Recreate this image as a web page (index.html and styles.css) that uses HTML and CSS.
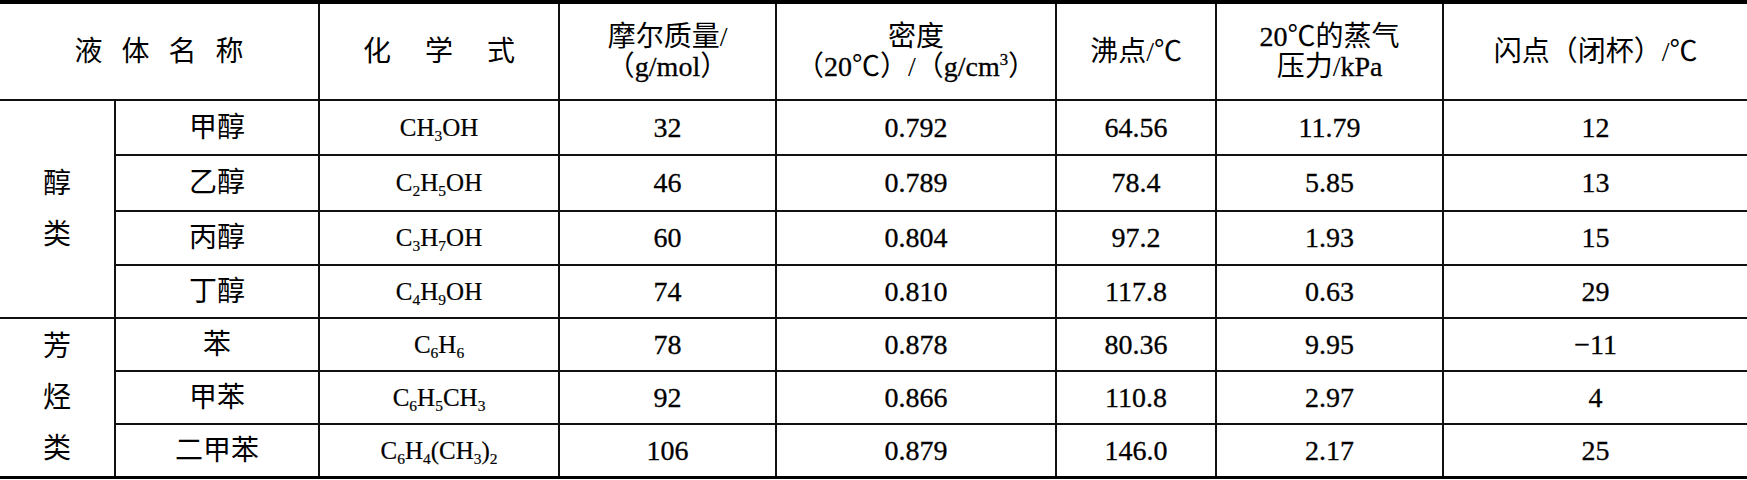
FILE: index.html
```html
<!DOCTYPE html>
<html lang="zh-CN">
<head>
    <meta charset="utf-8">
    <title>常见液体的物理性质</title>
    <link rel="stylesheet" href="styles.css">
</head>
<body>
<table class="tb">
    <colgroup>
        <col class="w1"><col class="w2"><col class="w3"><col class="w4">
        <col class="w5"><col class="w6"><col class="w7"><col class="w8">
    </colgroup>
    <tr class="head">
        <th colspan="2"><span class="sp1">液体名称</span></th>
        <th><span class="sp2">化学式</span></th>
        <th>摩尔质量/<br>（<span class="en">g/mol</span>）</th>
        <th>密度<br>（<span class="en">20</span>℃）/（<span class="en">g/cm<sup>3</sup></span>）</th>
        <th>沸点/℃</th>
        <th><span class="en">20</span>℃的蒸气<br>压力/<span class="en">kPa</span></th>
        <th>闪点（闭杯）/℃</th>
    </tr>
    <tr class="r1">
        <td rowspan="4" class="grp">醇<br>类</td>
        <td>甲醇</td>
        <td class="f">CH<sub>3</sub>OH</td>
        <td class="n">32</td><td class="n">0.792</td><td class="n">64.56</td><td class="n">11.79</td><td class="n">12</td>
    </tr>
    <tr class="r2">
        <td>乙醇</td>
        <td class="f">C<sub>2</sub>H<sub>5</sub>OH</td>
        <td class="n">46</td><td class="n">0.789</td><td class="n">78.4</td><td class="n">5.85</td><td class="n">13</td>
    </tr>
    <tr class="r3">
        <td>丙醇</td>
        <td class="f">C<sub>3</sub>H<sub>7</sub>OH</td>
        <td class="n">60</td><td class="n">0.804</td><td class="n">97.2</td><td class="n">1.93</td><td class="n">15</td>
    </tr>
    <tr>
        <td>丁醇</td>
        <td class="f">C<sub>4</sub>H<sub>9</sub>OH</td>
        <td class="n">74</td><td class="n">0.810</td><td class="n">117.8</td><td class="n">0.63</td><td class="n">29</td>
    </tr>
    <tr>
        <td rowspan="3" class="grp">芳<br>烃<br>类</td>
        <td>苯</td>
        <td class="f">C<sub>6</sub>H<sub>6</sub></td>
        <td class="n">78</td><td class="n">0.878</td><td class="n">80.36</td><td class="n">9.95</td><td class="n">−11</td>
    </tr>
    <tr>
        <td>甲苯</td>
        <td class="f">C<sub>6</sub>H<sub>5</sub>CH<sub>3</sub></td>
        <td class="n">92</td><td class="n">0.866</td><td class="n">110.8</td><td class="n">2.97</td><td class="n">4</td>
    </tr>
    <tr>
        <td>二甲苯</td>
        <td class="f">C<sub>6</sub>H<sub>4</sub>(CH<sub>3</sub>)<sub>2</sub></td>
        <td class="n">106</td><td class="n">0.879</td><td class="n">146.0</td><td class="n">2.17</td><td class="n">25</td>
    </tr>
</table>
</body>
</html>
```

FILE: styles.css
```css
*{
    padding: 0px;
    margin: 0px;
}
body{
    background-color: #ffffff;
}
.tb{
    width: 1747px;
    table-layout: fixed;
    border-collapse: collapse;
    border-top: 4px solid #000000;
    border-bottom: 3px solid #000000;
    font-family: "Liberation Serif", "Noto Sans CJK SC", serif;
    font-size: 28px;
    color: #000000;
}
.w1{ width: 115px; }
.w2{ width: 204px; }
.w3{ width: 240px; }
.w4{ width: 217px; }
.w5{ width: 280px; }
.w6{ width: 160px; }
.w7{ width: 227px; }
.w8{ width: 304px; }
.tb th, .tb td{
    border: 2px solid #111111;
    text-align: center;
    vertical-align: middle;
    font-weight: normal;
}
.tb tr > :first-child{
    border-left: none;
}
.tb tr > :last-child{
    border-right: none;
}
.head th{
    height: 95px;
    line-height: 30px;
}
.sp1{
    letter-spacing: 19px;
    margin-right: -19px;
}
.sp2{
    letter-spacing: 34px;
    margin-right: -34px;
}
.en, .n{
    font-family: "Liberation Serif", "Times New Roman", serif;
    -webkit-text-stroke: 0.3px #000000;
}
.tb sup{
    font-size: 0.6em;
    vertical-align: 0.65em;
    line-height: 0;
}
.tb td{
    height: 51px;
    line-height: 30px;
}
.r1 td{
    height: 53px;
}
.r2 td{
    height: 54px;
}
.r3 td{
    height: 52px;
}
.tb td.grp{
    border-left: none;
    line-height: 51px;
}
.f{
    font-size: 25px;
    font-family: "Liberation Serif", "Times New Roman", serif;
    -webkit-text-stroke: 0.2px #000000;
}
.f sub{
    font-size: 0.62em;
    vertical-align: -0.3em;
    line-height: 0;
}
```
